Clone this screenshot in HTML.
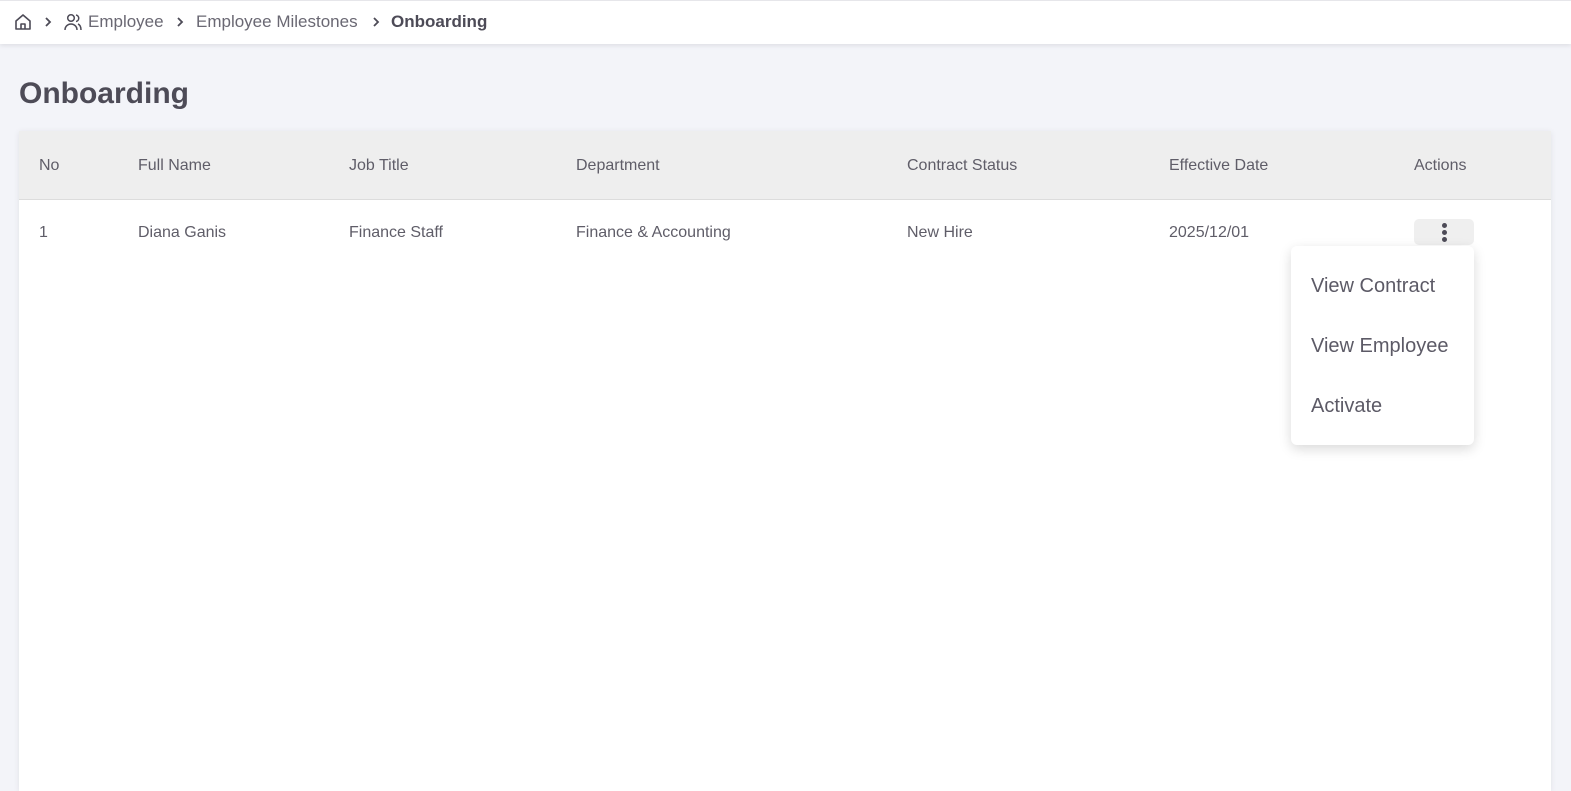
<!DOCTYPE html>
<html><head><style>
*{margin:0;padding:0;box-sizing:border-box}
body{width:1571px;height:783px;overflow:hidden;background:#f3f4f9;font-family:"Liberation Sans",sans-serif;color:#55535f;position:relative}
.top{position:absolute;left:0;top:0;width:1571px;height:44px;background:#fff;border-top:1px solid #e6e6ea;box-shadow:0 2px 4px rgba(0,0,0,.08)}
.bc{position:absolute;top:11px;font-size:17px;color:#6a6873}
.ch{position:absolute;top:16px}
h1{position:absolute;left:19px;top:77px;font-size:30px;font-weight:bold;color:#4d4b57}
.card{position:absolute;left:19px;top:131px;width:1532px;height:660px;background:#fff;box-shadow:0 1px 6px rgba(0,0,0,.08)}
.hd{position:absolute;left:0;top:0;width:100%;height:69px;background:#eeeeee;border-bottom:1px solid #dcdcdc}
.t{position:absolute;font-size:16px;color:#5f5d68}
.btn{position:absolute;left:1395px;top:88px;width:60px;height:26px;background:#efefef;border-radius:5px}
.dot{position:absolute;left:28px;width:5px;height:5px;border-radius:50%;background:#4d4b57}
.menu{position:absolute;left:1291px;top:246px;width:183px;height:199px;background:#fff;border-radius:6px;box-shadow:0 4px 12px rgba(0,0,0,.15)}
.mi{position:absolute;left:20px;font-size:20px;color:#5c5a66}
</style></head><body>
<div class="top">
<svg style="position:absolute;left:14px;top:12px" width="18" height="18" viewBox="0 0 18 18" fill="none" stroke="#4d4b57" stroke-width="1.6" stroke-linejoin="round"><path d="M2 8L9 2l7 6v8H2z"/><path d="M7 16v-5h4v5"/></svg>
<svg class="ch" style="left:44px" width="8" height="10" viewBox="0 0 8 10" fill="none" stroke="#4d4b57" stroke-width="1.8"><path d="M2 1l4 4-4 4"/></svg>
<svg style="position:absolute;left:63px;top:11px" width="20" height="20" viewBox="0 0 20 20" fill="none" stroke="#4d4b57" stroke-width="1.5"><circle cx="8" cy="6" r="3.3"/><path d="M2 18c0-3.5 2.7-6 6-6s6 2.5 6 6"/><path d="M13 3a3.3 3.3 0 010 6.5M15 12c2 .8 3 3 3 6"/></svg>
<span class="bc" style="left:88px">Employee</span>
<svg class="ch" style="left:176px" width="8" height="10" viewBox="0 0 8 10" fill="none" stroke="#4d4b57" stroke-width="1.8"><path d="M2 1l4 4-4 4"/></svg>
<span class="bc" style="left:196px">Employee Milestones</span>
<svg class="ch" style="left:372px" width="8" height="10" viewBox="0 0 8 10" fill="none" stroke="#4d4b57" stroke-width="1.8"><path d="M2 1l4 4-4 4"/></svg>
<span class="bc" style="left:391px;font-weight:bold;color:#4d4b57">Onboarding</span>
</div>
<h1>Onboarding</h1>
<div class="card">
<div class="hd"></div>
<span class="t" style="left:20px;top:26px">No</span>
<span class="t" style="left:119px;top:26px">Full Name</span>
<span class="t" style="left:330px;top:26px">Job Title</span>
<span class="t" style="left:557px;top:26px">Department</span>
<span class="t" style="left:888px;top:26px">Contract Status</span>
<span class="t" style="left:1150px;top:26px">Effective Date</span>
<span class="t" style="left:1395px;top:26px">Actions</span>
<span class="t" style="left:20px;top:93px">1</span>
<span class="t" style="left:119px;top:93px">Diana Ganis</span>
<span class="t" style="left:330px;top:93px">Finance Staff</span>
<span class="t" style="left:557px;top:93px">Finance &amp; Accounting</span>
<span class="t" style="left:888px;top:93px">New Hire</span>
<span class="t" style="left:1150px;top:93px">2025/12/01</span>
<div class="btn"><div class="dot" style="top:4px"></div><div class="dot" style="top:11px"></div><div class="dot" style="top:18px"></div></div>
</div>
<div class="menu">
<span class="mi" style="top:29px">View Contract</span>
<span class="mi" style="top:89px">View Employee</span>
<span class="mi" style="top:149px">Activate</span>
</div>
</body></html>
